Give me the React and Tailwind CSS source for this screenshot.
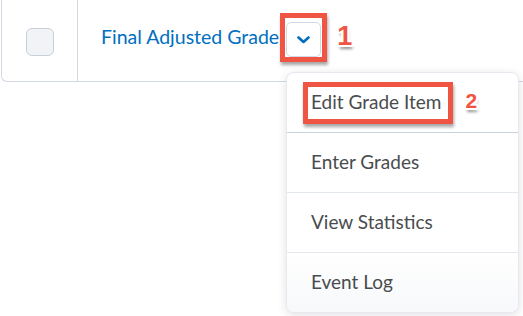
import React from 'react'

const menuItems = ['Enter Grades', 'View Statistics', 'Event Log']

// red annotation number with white outline and drop shadow
const badge = "font-['Liberation_Sans',sans-serif] font-bold leading-none text-[#f05442] [text-shadow:-2px_-2px_0_#fff,2px_-2px_0_#fff,-2px_2px_0_#fff,2px_2px_0_#fff,0_-2px_0_#fff,0_2px_0_#fff,-2px_0_0_#fff,2px_0_0_#fff,1px_4px_3px_rgba(0,0,0,0.45)]"

export default function App() {
  return (
    <div className="relative w-[523px] h-[316px] overflow-hidden bg-white font-['Lato','Liberation_Sans',sans-serif]">
      {/* grade row */}
      <div className="ml-[1px] flex h-[82px] border-l border-b border-[#d3d9e3] rounded-bl-md">
        <div className="flex w-[76px] items-center justify-center border-r border-[#d3d9e3]">
          <div className="mt-[2px] h-[28px] w-[28px] rounded-[6px] border border-[#c8cfd9] bg-[#f1f3f6]" />
        </div>
        <div className="flex items-start pl-[23px]">
          <span className="mt-[27px] text-[19.5px] leading-none text-[#006fbf]">Final Adjusted Grade</span>
          <div className="ml-[1px] mt-[13px] border-[5px] border-[#f05442] px-[1px] pt-[4px] shadow-[1px_3px_3px_rgba(0,0,0,0.35)]">
            <button className="flex h-[35px] w-[35px] items-center justify-center rounded-[5px] border border-[#d3d9e3] bg-white">
              <svg width="13" height="8" viewBox="0 0 13 8" fill="none">
                <path d="M1.5 1.5 L6.5 6 L11.5 1.5" stroke="#006fbf" strokeWidth="2.6" strokeLinecap="round" strokeLinejoin="round" />
              </svg>
            </button>
          </div>
          <span className={`ml-[10px] mt-[23px] text-[27px] ${badge}`}>1</span>
        </div>
      </div>

      {/* dropdown menu */}
      <div className="absolute left-[286px] top-[72px] w-[233px] overflow-hidden rounded-[8px] border border-[#e6eaf0] bg-white shadow-[0_2px_10px_rgba(0,0,0,0.12)]">
        <div className="flex h-[60px] items-center border-b border-[#c9d3dd] pl-4">
          <div className="flex h-[42px] items-center border-[5px] border-[#f05442] pl-[3px] pr-[7px] shadow-[1px_3px_3px_rgba(0,0,0,0.35)]">
            <span className="text-[19px] text-[#494c4e]">Edit Grade Item</span>
          </div>
          <span className={`mb-[4px] ml-[12px] text-[21px] ${badge}`}>2</span>
        </div>
        {menuItems.map((item, i) => (
          <div
            key={item}
            className={
              i === menuItems.length - 1
                ? 'flex h-[59px] items-center bg-gradient-to-b from-white to-[#f7f8fa] pl-6 text-[19px] text-[#494c4e]'
                : 'flex h-[60px] items-center border-b border-[#e3e7ee] pl-6 text-[19px] text-[#494c4e]'
            }
          >
            {item}
          </div>
        ))}
      </div>
    </div>
  )
}
